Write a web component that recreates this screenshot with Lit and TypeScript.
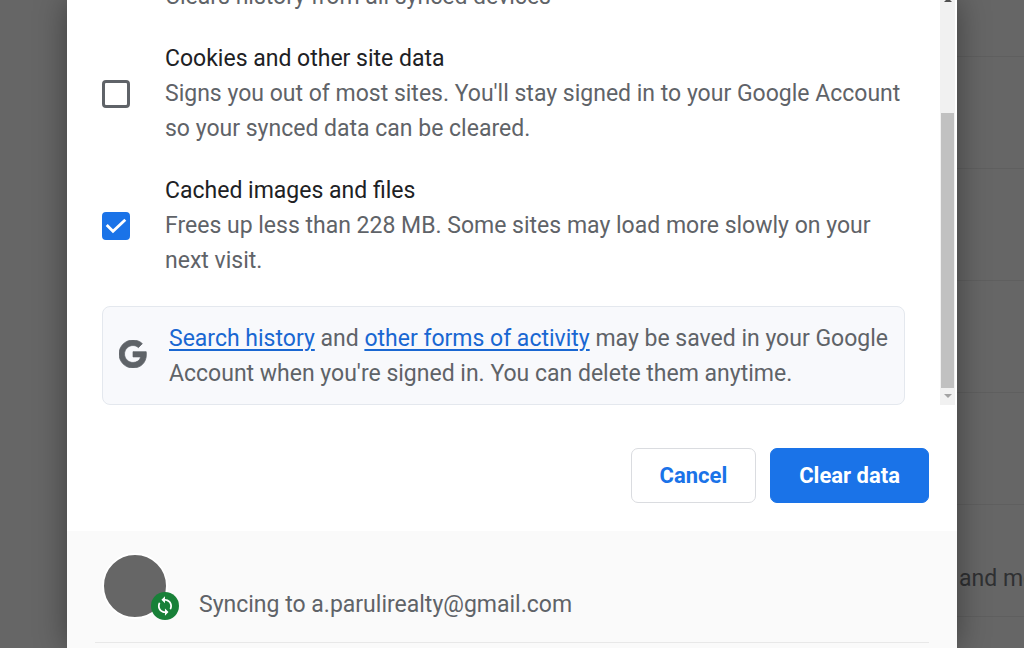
import { LitElement, html, css } from "lit";
import { customElement, state } from "lit/decorators.js";

@customElement("app-root")
export class AppRoot extends LitElement {
  @state() private cookies = false;
  @state() private cache = true;

  static styles = css`
    :host {
      display: block;
      font-family: Roboto, "Liberation Sans", sans-serif;
      font-size: 23px;
      line-height: 35px;
      color: #5f6368;
    }
    * { box-sizing: border-box; }
    .screen {
      display: grid;
      grid-template-columns: minmax(0, 1fr) minmax(0, 890px) minmax(0, 1fr);
      height: 100vh;
      overflow: hidden;
      background: #666;
    }
    .rows { display: flex; flex-direction: column; justify-content: end; padding-bottom: 31px; overflow: hidden; }
    .row {
      display: flex;
      align-items: center;
      flex: none;
      height: 112px;
      padding: 36px 0 0 2px;
      border-bottom: 1px solid #5f5f5f;
      color: #2f3032;
      white-space: nowrap;
    }
    .dialog {
      grid-column: 2;
      display: flex;
      flex-direction: column;
      background: #fff;
      box-shadow: 0 0 30px rgba(0, 0, 0, 0.4);
      z-index: 1;
      overflow: hidden;
    }
    .scroller { display: flex; flex: none; height: 405px; }
    .content {
      flex: 1;
      min-width: 0;
      display: flex;
      flex-direction: column;
      justify-content: end;
      gap: 27px;
      padding: 0 35px;
      overflow: hidden;
    }
    .item { display: grid; grid-template-columns: 28px minmax(0, 1fr); gap: 35px; align-items: center; flex: none; }
    .text { grid-column: 2; }
    .title { display: block; color: #202124; }
    .desc { display: block; }
    .box { display: grid; }
    .check {
      grid-area: 1 / 1;
      appearance: none;
      width: 28px;
      height: 28px;
      margin: 0;
      border: 3px solid #5f6368;
      border-radius: 4px;
      background: #fff;
    }
    .check:checked { background: #1a73e8; border-color: #1a73e8; }
    .tick { grid-area: 1 / 1; width: 28px; height: 28px; pointer-events: none; z-index: 1; }
    .notice {
      display: flex;
      flex: none;
      align-items: center;
      gap: 22px;
      margin-top: 1px;
      padding: 14px 12px 13px 16px;
      border: 1px solid #e4e8ee;
      border-radius: 8px;
      background: #f8f9fc;
    }
    .notice p { margin: 0; }
    .glyph { width: 28px; height: 28px; flex: none; margin-bottom: 4px; fill: #5f6368; }
    a { color: #1967d2; text-decoration: underline; text-decoration-thickness: 2px; text-underline-offset: 3px; }
    .bar { width: 15px; margin-right: 2px; display: flex; flex-direction: column; background: #f1f1f1; }
    .before { height: 113px; }
    .thumb { flex: 1; margin: 0 1px; background: #c1c1c1; }
    .arrow { display: block; width: 15px; height: 17px; fill: #a3a3a3; }
    .before .arrow { fill: #505050; height: 3px; }
    .actions { display: flex; flex: none; justify-content: end; gap: 14px; padding: 43px 28px 28px; }
    button {
      height: 55px;
      padding: 0 28px;
      border: 1px solid #dadce0;
      border-radius: 7px;
      background: #fff;
      color: #1a73e8;
      font: 700 22px/35px Roboto, "Liberation Sans", sans-serif;
    }
    .primary { background: #1a73e8; border-color: #1a73e8; color: #fff; }
    .footer { flex: 1; padding: 22px 28px 0; background: #fafafa; }
    .account { display: flex; align-items: end; gap: 31px; height: 90px; padding: 0 7px 20px; border-bottom: 1px solid #e8e8e8; }
    .avatar { position: relative; width: 66px; height: 66px; margin-bottom: 3px; border: 2px solid #fff; border-radius: 50%; background: #666; }
    .badge { position: absolute; right: -13px; bottom: -3px; width: 28px; height: 28px; }
  `;

  private item(id: string, title: string, desc: string, checked: boolean, set: (v: boolean) => void) {
    return html`<div class="item">
      <span class="box">
        <input class="check" type="checkbox" id=${id} .checked=${checked}
          @change=${(e: Event) => set((e.target as HTMLInputElement).checked)} />
        ${checked
          ? html`<svg class="tick" viewBox="0 0 28 28"><path d="M4.7 13L11 19.3L23.3 7.8" fill="none" stroke="#fff" stroke-width="2.8" /></svg>`
          : ""}
      </span>
      <label class="text" for=${id}><span class="title">${title}</span><span class="desc">${desc}</span></label>
    </div>`;
  }

  render() {
    return html`<div class="screen">
      <main class="dialog">
        <div class="scroller">
          <div class="content">
            <div class="item"><span class="text">Clears history from all synced devices</span></div>
            ${this.item("cookies", "Cookies and other site data",
              "Signs you out of most sites. You'll stay signed in to your Google Account so your synced data can be cleared.",
              this.cookies, (v) => (this.cookies = v))}
            ${this.item("cache", "Cached images and files",
              "Frees up less than 228 MB. Some sites may load more slowly on your next visit.",
              this.cache, (v) => (this.cache = v))}
            <div class="notice">
              <svg class="glyph" viewBox="0 0 48 48"><path stroke="#5f6368" stroke-width="1.2" d="M24 9.5c3.54 0 6.71 1.22 9.21 3.6l6.85-6.85C35.9 2.38 30.47 0 24 0 10.7 0 0 10.7 0 24s10.7 24 24 24c6.48 0 11.93-2.13 15.89-5.81 4.5-4.1 7.09-10.3 7.09-17.64 0-1.57-.15-3.09-.38-4.55H24v9.02h12.94c-.58 2.96-2.26 5.48-4.78 7.18-2.15 1.45-4.92 2.3-8.16 2.3-8 0-14.5-6.5-14.5-14.5S16 9.5 24 9.5z" /></svg>
              <p><a href="#history">Search history</a> and <a href="#activity">other forms of activity</a> may be saved in your Google Account when you're signed in. You can delete them anytime.</p>
            </div>
          </div>
          <div class="bar">
            <div class="before"><svg class="arrow" viewBox="0 0 15 3"><path d="M4 2L6 0H10L12 2Z" /></svg></div>
            <div class="thumb"></div>
            <svg class="arrow" viewBox="0 0 15 17"><path d="M4 6H12L8 10Z" /></svg>
          </div>
        </div>
        <div class="actions">
          <button type="button">Cancel</button>
          <button type="button" class="primary">Clear data</button>
        </div>
        <footer class="footer">
          <div class="account">
            <div class="avatar">
              <svg class="badge" viewBox="0 0 28 28">
                <circle cx="14" cy="14" r="14" fill="#188038" />
                <path transform="translate(3.4 3.4) scale(.88)" fill="#fff" d="M12 4V1L8 5l4 4V6c3.31 0 6 2.69 6 6 0 1.01-.25 1.97-.7 2.8l1.46 1.46A7.93 7.93 0 0 0 20 12c0-4.42-3.58-8-8-8zm0 14c-3.31 0-6-2.69-6-6 0-1.01.25-1.97.7-2.8L5.24 7.74A7.93 7.93 0 0 0 4 12c0 4.42 3.58 8 8 8v3l4-4-4-4v3z" />
              </svg>
            </div>
            <span>Syncing to a.parulirealty@gmail.com</span>
          </div>
        </footer>
      </main>
      <div class="rows">
        ${["", "", "", "", "", "and more"].map((t) => html`<div class="row">${t}</div>`)}
      </div>
    </div>`;
  }
}
